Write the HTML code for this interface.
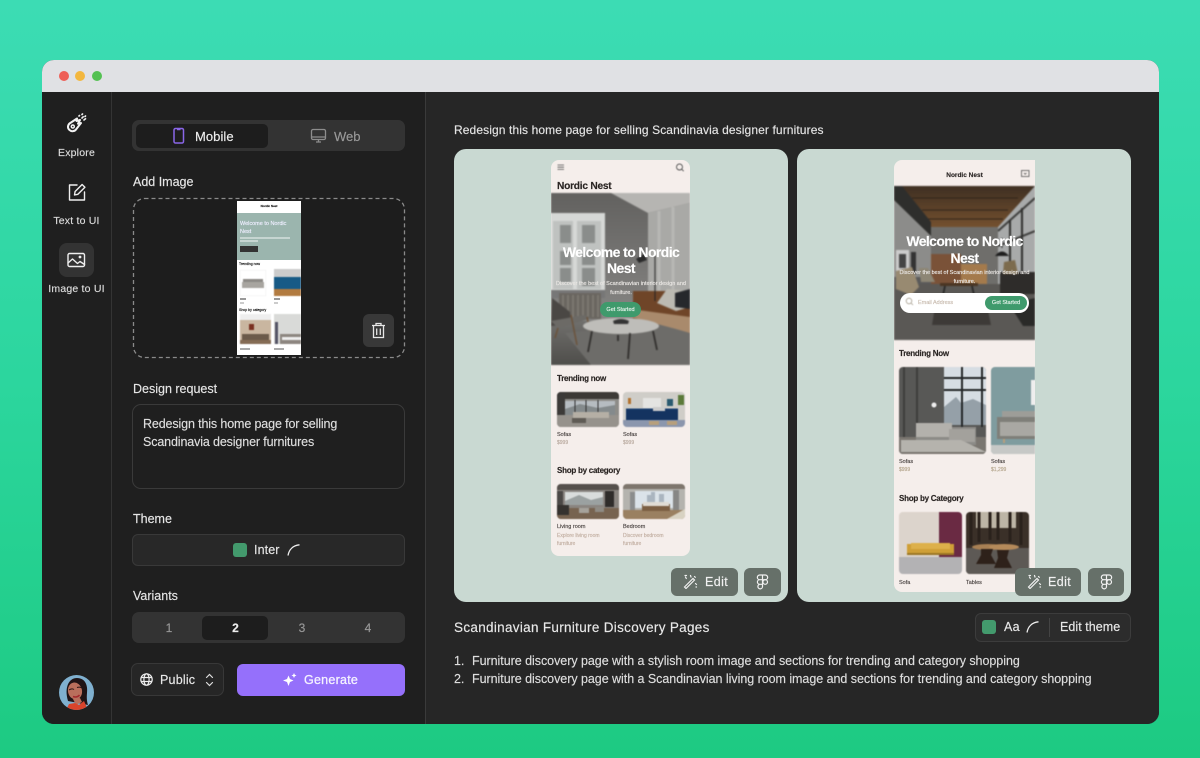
<!DOCTYPE html>
<html><head><meta charset="utf-8"><style>
*{box-sizing:border-box;margin:0;padding:0}
html,body{width:1200px;height:758px;overflow:hidden}
body{position:relative;background:linear-gradient(180deg,#3cdcb4 0%,#2cd69e 50%,#1dca82 100%);font-family:"Liberation Sans",sans-serif}
.a{position:absolute}
.t{position:absolute;white-space:nowrap;line-height:1;-webkit-text-stroke:.15px currentColor}
.c{transform:translateX(-50%)}
svg{position:absolute;display:block;overflow:hidden}
.ph svg{filter:blur(.4px)}
.ic{fill:none;stroke:#eee;stroke-width:1.4;stroke-linecap:round;stroke-linejoin:round}
.l{color:#e6e6e6;font-size:12.5px;letter-spacing:0}
.sb{color:#ddd;font-size:10.5px;letter-spacing:.2px}
.s{color:#2a2523;font-weight:bold;letter-spacing:-.25px}
.x{color:#4d4745;font-size:5.5px}
.p{color:#b9aa9f;font-size:5px}
.btn{position:absolute;background:#667069;border-radius:6px}
</style></head><body>
<div class="a" style="left:42px;top:60px;width:1117px;height:664px;border-radius:12px;overflow:hidden;background:#222">
<div class="a" style="left:0;top:0;width:1117px;height:32px;background:#e0e1e4"></div>
<div class="a" style="left:17px;top:11px;width:10px;height:10px;border-radius:50%;background:#ee5f57"></div>
<div class="a" style="left:33px;top:11px;width:10px;height:10px;border-radius:50%;background:#f3b73e"></div>
<div class="a" style="left:50px;top:11px;width:10px;height:10px;border-radius:50%;background:#54c152"></div>
<div class="a" style="left:0;top:32px;width:69px;height:632px;background:#1f1f1f"></div>
<div class="a" style="left:69px;top:32px;width:1px;height:632px;background:#343434"></div>
<div class="a" style="left:70px;top:32px;width:313px;height:632px;background:#1f1f1f"></div>
<div class="a" style="left:383px;top:32px;width:1px;height:632px;background:#3a3a3a"></div>
<div class="a" style="left:384px;top:32px;width:733px;height:632px;background:#262626"></div>
</div>

<!-- sidebar -->
<svg style="left:66px;top:113px" width="22" height="20" viewBox="0 0 22 20" fill="none" stroke="#f2f2f2" stroke-linecap="round" stroke-linejoin="round"><path d="M11 5.500 3.500 10.500c-2 2-2 5 0 6.500 2 1.800 5 1.500 6.500-.5l5-6.500-3 .7 2-3.700-3.500 1z" stroke-width="2"/><circle cx="6.800" cy="13.500" r="1.500" stroke-width="1.500"/><path d="M13 3l.5-.5M16 1.500l.5-.5M16 5l1.200-1.200M19 3.500l.5-.5M18 7l1.500-1.200" stroke-width="1.600"/></svg>
<div class="t c sb" style="left:76.500px;top:148px">Explore</div>
<svg style="left:67px;top:182px" width="20" height="20" viewBox="0 0 20 20" class="ic"><path d="M10 3H2.500v15h15v-8"/><path d="M7.500 13l.6-3.500 7-7 2.800 2.800-7 7z"/></svg>
<div class="t c sb" style="left:76.500px;top:216px">Text to UI</div>
<div class="a" style="left:59px;top:243px;width:35px;height:34px;border-radius:8px;background:#333"></div>
<svg style="left:67px;top:252px" width="19" height="16" viewBox="0 0 19 16" class="ic"><rect x="1" y="1.500" width="16.500" height="13" rx="1.500"/><path d="M1 11l4.500-4 5 4.500 2.500-2 4.500 3"/><circle cx="13" cy="5" r=".7"/></svg>
<div class="t c sb" style="left:76.500px;top:284px">Image to UI</div>
<svg style="left:59px;top:675px" width="35" height="35" viewBox="0 0 35 35"><defs><clipPath id="av"><circle cx="17.500" cy="17.500" r="17.500"/></clipPath></defs><g clip-path="url(#av)"><rect width="35" height="35" fill="#7fb0cf"/><path d="M9 26C5 12 10 3 18 3c8 0 11 7 10 15-.5 5 0 9 1 12l-10-2z" fill="#1f1416"/><ellipse cx="16" cy="16" rx="7" ry="8.500" fill="#b96f5c" transform="rotate(-12 16 16)"/><path d="M10 15q3-2 5-.5M18 12.500q3-1 5 .5" stroke="#2a1414" fill="none"/><path d="M14 21.500q4 1.500 6.500-1.500" stroke="#a3282c" stroke-width="1.600" fill="none"/><path d="M14 24l7-1 2 4-6 3z" fill="#b96f5c"/><path d="M7 35l3-6 6-1 4 2 5-4 4 9z" fill="#d8442c"/></g></svg>

<!-- Mode tabs -->
<div class="a" style="left:132px;top:120px;width:273px;height:31px;border-radius:7px;background:#333"></div>
<div class="a" style="left:136px;top:124px;width:132px;height:24px;border-radius:5px;background:#1d1d1d"></div>
<svg style="left:172px;top:127px" width="14" height="18" viewBox="0 0 14 18" fill="none" stroke="#8a66e8" stroke-width="1.500"><rect x="2" y="1.500" width="9.500" height="14.500" rx="1.500"/><path d="M5 2.500h3.500" stroke-width="1.500"/></svg>
<div class="t" style="left:195px;top:129.500px;color:#eee;font-size:13px;letter-spacing:.05px">Mobile</div>
<svg style="left:310px;top:128px" width="17" height="16" viewBox="0 0 17 16" fill="none" stroke="#8d8d8d" stroke-width="1.300"><rect x="1.500" y="1.500" width="14" height="10" rx="1.500"/><path d="M1.500 9h14M6 14h5M8.500 11.500V14"/></svg>
<div class="t" style="left:334px;top:129.500px;color:#9a9a9a;font-size:13px;letter-spacing:0">Web</div>

<!-- add image -->
<div class="t l" style="left:133px;top:175.500px">Add Image</div>
<svg style="left:132px;top:197px" width="274" height="162" viewBox="0 0 274 162"><rect x="1.500" y="1.500" width="271" height="159" rx="11" fill="#1d1d1d" stroke="#8a8a8a" stroke-width="1.300" stroke-dasharray="4 3"/></svg>
<!-- thumb -->
<div class="a ph" style="left:237px;top:201px;width:64px;height:154px;background:#fff;overflow:hidden">
<div class="t c" style="left:32px;top:4px;font-size:3px;font-weight:bold;color:#222">Nordic Nest</div>
<div class="a" style="left:0;top:12px;width:64px;height:47px;background:#9bb5ae"></div>
<div class="t" style="left:3px;top:20px;font-size:5.500px;line-height:7.500px;color:#eef;white-space:normal;width:55px">Welcome to Nordic Nest</div>
<div class="a" style="left:3px;top:36px;width:50px;height:1.500px;background:#c6d5d1"></div>
<div class="a" style="left:3px;top:39px;width:18px;height:1.500px;background:#c6d5d1"></div>
<div class="a" style="left:3px;top:45px;width:18px;height:6px;background:#333"></div>
<div class="t" style="left:2px;top:62px;font-size:3.500px;color:#222">Trending now</div>
<svg style="left:3px;top:69px" width="26" height="26" viewBox="0 0 26 26"><rect width="26" height="26" fill="#fff" stroke="#eee"/><path d="M3 9h20v7H3z" fill="#8d8a86"/><path d="M2 12h22v6H2z" fill="#a8a5a0"/></svg>
<svg style="left:37px;top:68px" width="27" height="27" viewBox="0 0 27 27"><rect width="27" height="27" fill="#ccc"/><path d="M0 8h27v12H0z" fill="#175a86"/><path d="M0 20h27v7H0z" fill="#b27b40"/></svg>
<div class="a" style="left:3px;top:97px;width:6px;height:1.500px;background:#999"></div>
<div class="a" style="left:37px;top:97px;width:6px;height:1.500px;background:#999"></div>
<div class="a" style="left:3px;top:101px;width:4px;height:1.500px;background:#ccc"></div>
<div class="a" style="left:37px;top:101px;width:4px;height:1.500px;background:#ccc"></div>
<div class="t" style="left:2px;top:108px;font-size:3.500px;color:#222">Shop by category</div>
<svg style="left:3px;top:113px" width="31" height="30" viewBox="0 0 31 30"><rect width="31" height="30" fill="#c9b6a0"/><rect width="31" height="6" fill="#eee"/><rect x="9" y="10" width="5" height="6" fill="#7a3020"/><path d="M2 20h27v6H2z" fill="#6b5a4a"/><rect y="26" width="31" height="4" fill="#856c55"/></svg>
<svg style="left:37px;top:113px" width="27" height="30" viewBox="0 0 27 30"><rect width="27" height="30" fill="#d9dad8"/><rect x="1" y="8" width="3" height="22" fill="#556"/><path d="M6 20h21v10H6z" fill="#8d8680"/><path d="M8 23h19v3H8z" fill="#eee"/></svg>
<div class="a" style="left:3px;top:147px;width:10px;height:1.500px;background:#aaa"></div>
<div class="a" style="left:37px;top:147px;width:10px;height:1.500px;background:#aaa"></div>
</div>
<div class="a" style="left:363px;top:314px;width:31px;height:33px;border-radius:6px;background:#383838"></div>
<svg style="left:371px;top:322px" width="15" height="17" viewBox="0 0 15 17" fill="none" stroke="#e6e6e6" stroke-width="1.300"><path d="M1 3.500h13M5 3.500V1.500h5v2M2.500 3.500v12h10v-12M5.700 6.500v6.500M9.300 6.500v6.500"/></svg>

<!-- design request -->
<div class="t l" style="left:133px;top:382.500px">Design request</div>
<div class="a" style="left:132px;top:404px;width:273px;height:85px;border-radius:9px;border:1px solid #3a3a3a;background:#1f1f1f"></div>
<div class="t" style="left:143px;top:418px;color:#dedede;font-size:12.500px;letter-spacing:-.13px">Redesign this home page for selling</div>
<div class="t" style="left:143px;top:436px;color:#dedede;font-size:12.500px;letter-spacing:-.13px">Scandinavia designer furnitures</div>

<!-- theme -->
<div class="t l" style="left:133px;top:512.500px">Theme</div>
<div class="a" style="left:132px;top:534px;width:273px;height:32px;border-radius:6px;border:1px solid #393939;background:#282828"></div>
<div class="a" style="left:233px;top:543px;width:14px;height:14px;border-radius:3px;background:#439a6d"></div>
<div class="t" style="left:254px;top:544px;color:#e6e6e6;font-size:12.500px;letter-spacing:.1px">Inter</div>
<svg style="left:286px;top:543px" width="15" height="14" viewBox="0 0 15 14" fill="none" stroke="#eee" stroke-width="1.300"><path d="M2 12.500C3 6.500 7 2.500 13.500 1.800"/></svg>

<!-- variants -->
<div class="t l" style="left:133px;top:589.500px">Variants</div>
<div class="a" style="left:132px;top:612px;width:273px;height:31px;border-radius:7px;background:#333"></div>
<div class="a" style="left:202px;top:616px;width:66px;height:24px;border-radius:5px;background:#1d1d1d"></div>
<div class="t c" style="left:169px;top:622px;color:#999;font-size:12px">1</div>
<div class="t c" style="left:235.500px;top:622px;color:#eee;font-size:12px;font-weight:bold">2</div>
<div class="t c" style="left:302px;top:622px;color:#999;font-size:12px">3</div>
<div class="t c" style="left:368px;top:622px;color:#999;font-size:12px">4</div>

<!-- bottom -->
<div class="a" style="left:131px;top:663px;width:93px;height:33px;border-radius:7px;border:1px solid #383838;background:#262626"></div>
<svg style="left:139px;top:672px" width="15" height="15" viewBox="0 0 15 15" fill="none" stroke="#eee" stroke-width="1.200"><circle cx="7.500" cy="7.500" r="5.700"/><ellipse cx="7.500" cy="7.500" rx="2.600" ry="5.700"/><path d="M2 5.500h11M2 9.500h11"/></svg>
<div class="t" style="left:160px;top:673.500px;color:#e8e8e8;font-size:12.500px;letter-spacing:.2px">Public</div>
<svg style="left:203px;top:672px" width="13" height="16" viewBox="0 0 13 16" fill="none" stroke="#ddd" stroke-width="1.200" stroke-linecap="round"><path d="M3.500 5.500l3-3 3 3M3.500 10.500l3 3 3-3"/></svg>
<div class="a" style="left:237px;top:664px;width:168px;height:32px;border-radius:6px;background:#9570fb"></div>
<svg style="left:282px;top:672px" width="16" height="16" viewBox="0 0 16 16" fill="#fff"><path d="M6.500 3.500l1.500 3.500 3.500 1.500-3.500 1.500-1.500 4-1.500-4L1 8.500 5 7zM12 1l.8 1.700 1.700.8-1.700.8L12 6l-.8-1.700-1.700-.8 1.700-.8z"/></svg>
<div class="t" style="left:304px;top:673.500px;color:#f4f1ff;font-size:12.500px;letter-spacing:.25px;-webkit-text-stroke:.3px #f4f1ff">Generate</div>

<!-- right -->
<div class="t" style="left:454px;top:123.500px;color:#e4e4e4;font-size:12px;letter-spacing:.11px">Redesign this home page for selling Scandinavia designer furnitures</div>
<div class="a" style="left:454px;top:149px;width:334px;height:453px;border-radius:12px;background:#c9d9d2"></div>
<div class="a" style="left:797px;top:149px;width:334px;height:453px;border-radius:12px;background:#c9d9d2"></div>

<!-- Phone 1 -->
<div class="a ph" style="left:551px;top:160px;width:139px;height:396px;border-radius:8px;background:#f5eeeb;overflow:hidden">
<svg style="left:6px;top:4px" width="8" height="7" viewBox="0 0 8 7" stroke="#555" stroke-width=".8"><path d="M.5 1h6.500M.5 3.200h6.500M.5 5.400h6.500"/></svg>
<svg style="left:124px;top:3px" width="10" height="9" viewBox="0 0 10 9" fill="none" stroke="#555" stroke-width=".9"><circle cx="4.500" cy="4" r="3"/><path d="M6.700 6.200l2 2"/></svg>
<div class="t s" style="left:6px;top:22px;font-size:10.200px">Nordic Nest</div>
<svg style="left:0;top:33px;filter:blur(.7px)" width="139" height="172" viewBox="0 0 139 172">
<defs><linearGradient id="w1" x1="0" y1="0" x2="0" y2="1"><stop offset="0" stop-color="#62615f"/><stop offset="1" stop-color="#939290"/></linearGradient><linearGradient id="f1" x1="0" y1="0" x2="0" y2="1"><stop offset="0" stop-color="#706f6c"/><stop offset="1" stop-color="#4e4d4a"/></linearGradient></defs>
<rect width="139" height="172" fill="url(#w1)"/>
<path d="M60 0h79v10l-42 10z" fill="#b6b5b2"/>
<path d="M97 20l42-10v110H97z" fill="#a9a9a6"/>
<path d="M108 18v88M122 14v90" stroke="#b7b7b4" stroke-width="3"/>
<path d="M0 20h54v77H0z" fill="#d6d8d6"/>
<path d="M2 28h20v68H2zM26 28h24v68H26z" fill="#bfc2c0"/>
<path d="M9 32h11v18H9zM9 58h11v14H9zM9 75h11v14H9zM31 32h13v18H31zM31 58h13v14H31zM31 75h13v18H31z" fill="#8a8d8b"/>
<path d="M0 97h54v8H0z" fill="#777"/>
<path d="M8 100h42v26H8z" fill="#6a6660"/>
<path d="M12 102v22M17 102v22M22 102v22M27 102v22M32 102v22M37 102v22M42 102v22M47 102v22" stroke="#86827b" stroke-width="1.200"/>
<path d="M0 128h139v44H0z" fill="url(#f1)"/>
<path d="M14 140l96-10 29 6v36H40z" fill="#6d6c69"/>
<path d="M82 98h57v28H82z" fill="#6f4528"/>
<path d="M80 116l59 8v16l-14-4-45-12z" fill="#a98a6c"/>
<path d="M106 110l10-14 23 2v16l-14 4z" fill="#bcbab2"/>
<path d="M124 100l15-4v20l-15-2z" fill="#26282c"/>
<path d="M1 105l18 14 1 12-20 2z" fill="#4a4744"/>
<path d="M0 128l33-6 8 3-34 10z" fill="#6c6a66"/>
<path d="M7 135l-3 10M20 122l6 30M36 124l3 14" stroke="#6b5137" stroke-width="1.400"/>
<ellipse cx="70" cy="133" rx="38" ry="8" fill="#bebdb9"/>
<path d="M62 128q8-4 16 0l-1 3h-14z" fill="#333"/>
<path d="M41 138l-4 21M102 138l4 19M79 140l-2 26M67 142v6" stroke="#2c2a28" stroke-width="1.700"/>
<path d="M104 62v46" stroke="#222" stroke-width="1"/><path d="M85 66l8-5 3 6-8 3z" fill="#2a2a2a"/>
</svg>
<div class="t c" style="left:70px;top:84px;color:#fff;font-size:14px;font-weight:bold;letter-spacing:-.6px;line-height:16px;text-align:center;width:125px;white-space:normal">Welcome to Nordic Nest</div>
<div class="t c" style="left:70px;top:120px;color:#e9e6e3;font-size:5.500px;line-height:8.500px;text-align:center;width:130px;white-space:normal">Discover the best of Scandinavian interior design and furniture.</div>
<div class="a" style="left:49px;top:142px;width:41px;height:15px;border-radius:8px;background:#3f9a6c"></div>
<div class="t c" style="left:69.500px;top:147.500px;color:#e6f3ec;font-size:5.500px">Get Started</div>
<div class="t s" style="left:6px;top:215px;font-size:8px">Trending now</div>
<svg style="left:6px;top:232px" width="62" height="35" viewBox="0 0 62 35"><defs><clipPath id="r1"><rect width="62" height="35" rx="4"/></clipPath></defs><g clip-path="url(#r1)"><rect width="62" height="35" fill="#8d8c88"/><rect width="62" height="7" fill="#3d3a36"/><rect x="8" y="9" width="50" height="14" fill="#b6bcc1"/><path d="M8 17l15-5 18 4 17-3v10H8z" fill="#848a8c"/><path d="M0 0h8v24H0z" fill="#3c3a38"/><path d="M18 8v15M29 8v15M41 8v15" stroke="#333"/><rect x="0" y="23" width="62" height="12" fill="#96928c"/><path d="M16 20h36v6H16z" fill="#b5afa5"/><rect x="15" y="26" width="14" height="5" fill="#5f5b55"/></g></svg>
<svg style="left:72px;top:232px" width="62" height="35" viewBox="0 0 62 35"><defs><clipPath id="r2"><rect width="62" height="35" rx="4"/></clipPath></defs><g clip-path="url(#r2)"><rect width="62" height="35" fill="#cfcdc8"/><rect x="20" y="6" width="18" height="10" fill="#e4e4e2"/><rect x="44" y="7" width="6" height="7" fill="#2a5a70"/><rect x="5" y="6" width="3" height="6" fill="#b3722f"/><rect x="55" y="3" width="6" height="10" fill="#5c7a3a"/><path d="M3 17h52v11H3z" fill="#143360"/><path d="M3 17h52" stroke="#1f4477"/><rect x="30" y="15" width="12" height="4" fill="#ccc"/><rect y="28" width="62" height="7" fill="#8b96ad"/><rect x="26" y="29" width="10" height="4" fill="#b79f7c"/><rect x="44" y="29" width="10" height="4" fill="#b79f7c"/></g></svg>
<div class="t x" style="left:6px;top:273px">Sofas</div><div class="t p" style="left:6px;top:281px">$999</div>
<div class="t x" style="left:72px;top:273px">Sofas</div><div class="t p" style="left:72px;top:281px">$999</div>
<div class="t s" style="left:6px;top:307px;font-size:8px">Shop by category</div>
<svg style="left:6px;top:324px" width="62" height="35" viewBox="0 0 62 35"><defs><clipPath id="r3"><rect width="62" height="35" rx="4"/></clipPath></defs><g clip-path="url(#r3)"><rect width="62" height="35" fill="#8a8580"/><rect width="62" height="6" fill="#55504c"/><rect x="8" y="8" width="38" height="13" fill="#d9dcdc"/><path d="M8 17l14-6 12 5 12-3v8H8z" fill="#9ba1a1"/><rect x="48" y="7" width="9" height="16" fill="#2f2c2a"/><rect x="0" y="7" width="6" height="18" fill="#4b4846"/><rect y="24" width="62" height="11" fill="#776350"/><rect x="0" y="21" width="12" height="10" fill="#35322f"/><rect x="22" y="24" width="10" height="5" fill="#a6a29b"/><rect x="38" y="23" width="9" height="5" fill="#8f8b84"/></g></svg>
<svg style="left:72px;top:324px" width="62" height="35" viewBox="0 0 62 35"><defs><clipPath id="r4"><rect width="62" height="35" rx="4"/></clipPath></defs><g clip-path="url(#r4)"><rect width="62" height="35" fill="#b4b3ae"/><rect width="62" height="5" fill="#7e766d"/><rect x="12" y="7" width="38" height="17" fill="#dbe3e9"/><path d="M24 22V11h4v-3h4v14M36 22V10h5v12" fill="#aab5bf"/><rect x="7" y="8" width="5" height="18" fill="#8b8d8d"/><rect x="50" y="6" width="6" height="20" fill="#878785"/><rect y="26" width="62" height="9" fill="#9a8061"/><path d="M19 20h28v7H19z" fill="#7c5f43"/><path d="M20 18h26v4H20z" fill="#e0dcd5"/><path d="M44 35l18-10v10z" fill="#d8d2c2"/></g></svg>
<div class="t x" style="left:6px;top:365px">Living room</div>
<div class="t p" style="left:6px;top:372px;color:#c3b0a3;line-height:8px;white-space:normal;width:60px">Explore living room furniture</div>
<div class="t x" style="left:72px;top:365px">Bedroom</div>
<div class="t p" style="left:72px;top:372px;color:#c3b0a3;line-height:8px;white-space:normal;width:56px">Discover bedroom furniture</div>
</div>

<!-- Phone 2 -->
<div class="a ph" style="left:894px;top:160px;width:141px;height:432px;border-radius:8px 0 8px 8px;background:#f5eeeb;overflow:hidden">
<div class="t c" style="left:70.500px;top:12.500px;font-size:6.500px;font-weight:bold;color:#2c2726">Nordic Nest</div>
<svg style="left:127px;top:10px" width="9" height="8" viewBox="0 0 9 8" fill="none" stroke="#555" stroke-width=".8"><rect x=".5" y=".5" width="7.500" height="6"/><path d="M3 3l1.200 1.200L5.500 3"/></svg>
<svg style="left:0;top:26px;filter:blur(.7px)" width="141" height="154" viewBox="0 0 141 154">
<defs><linearGradient id="c2" x1="0" y1="0" x2="0" y2="1"><stop offset="0" stop-color="#3e2f22"/><stop offset="1" stop-color="#74502e"/></linearGradient></defs>
<rect width="141" height="154" fill="#5a5a5a"/>
<path d="M0 0h141l-37 41H37z" fill="url(#c2)"/>
<path d="M18 12h106M28 24h86M33 33h76" stroke="#2e231a" stroke-width="1"/>
<path d="M0 0l37 41v50H0z" fill="#8c8c8a"/>
<path d="M0 0h8l29 36v14L0 14z" fill="#2e2e2c"/>
<path d="M141 0l-37 41v58h37z" fill="#a8aaaa"/>
<path d="M104 45l37-33M104 60l37-15" stroke="#3c3c3a" stroke-width="2"/>
<path d="M116 34v64M128 22v76" stroke="#2e2e2c" stroke-width="2"/>
<rect x="37" y="41" width="67" height="60" fill="#6f6e6b"/>
<rect x="37" y="68" width="30" height="36" fill="#7a5238"/>
<rect x="67" y="78" width="26" height="20" fill="#a47a4c"/>
<rect x="0" y="98" width="141" height="56" fill="#5a5855"/>
<rect x="2" y="64" width="13" height="22" fill="#ccc"/><rect x="5" y="68" width="7" height="14" fill="#444"/><rect x="17" y="66" width="5" height="22" fill="#333"/>
<path d="M2 85l16-4 7 20-8 8-15-6z" fill="#988a71"/>
<path d="M25 82h9l7 14H27z" fill="#8d8675"/>
<path d="M46 97h38v3H46z" fill="#4a3522"/>
<path d="M51 100l-2 9M78 100l2 9" stroke="#222" stroke-width="1.600"/>
<path d="M106 86h35v22h-35z" fill="#2e2c2a"/>
<path d="M110 76l11-2 3 14h-15z" fill="#7c6b4d"/>
<path d="M101 70q7-9 14 0z" fill="#1d1d1d"/><path d="M108 52v10" stroke="#222"/>
<path d="M42 115h50l5 24H38z" fill="#3d3a37"/>
<path d="M115 118l26-6v28h-12z" fill="#2a2a28"/>
</svg>
<div class="t c" style="left:70.500px;top:73px;color:#fff;font-size:14px;font-weight:bold;letter-spacing:-.6px;line-height:16.500px;text-align:center;width:125px;white-space:normal">Welcome to Nordic Nest</div>
<div class="t c" style="left:70.500px;top:108.500px;color:#e9e6e3;font-size:5.500px;line-height:9px;text-align:center;width:135px;white-space:normal">Discover the best of Scandinavian interior design and furniture.</div>
<div class="a" style="left:6px;top:133px;width:129px;height:20px;border-radius:10px;background:#fff"></div>
<svg style="left:11px;top:137px" width="9" height="9" viewBox="0 0 9 9" fill="none" stroke="#a79f8f" stroke-width=".8"><circle cx="4" cy="4" r="2.800"/><path d="M6 6l2 2"/></svg>
<div class="t" style="left:24px;top:140.500px;color:#c9bcb0;font-size:5.500px">Email Address</div>
<div class="a" style="left:91px;top:136px;width:42px;height:14px;border-radius:7px;background:#3f9a6c"></div>
<div class="t c" style="left:112px;top:140.500px;color:#e6f3ec;font-size:5.500px">Get Started</div>
<div class="t s" style="left:5px;top:190px;font-size:8px">Trending Now</div>
<svg style="left:5px;top:207px" width="87" height="87" viewBox="0 0 87 87"><defs><clipPath id="r5"><rect width="87" height="87" rx="4"/></clipPath></defs><g clip-path="url(#r5)"><rect width="87" height="87" fill="#585856"/><path d="M5 0v70M18 0v70" stroke="#3e3e3c" stroke-width="2"/><rect x="45" y="0" width="42" height="58" fill="#d6dde3"/><path d="M45 40l12-10 5 6 12-4 13 6v20H45z" fill="#95a0a8"/><path d="M63 0v60M83 0v60M45 11h42M45 23h42" stroke="#25282a" stroke-width="2"/><rect x="0" y="70" width="87" height="17" fill="#7a7670"/><rect x="17" y="60" width="60" height="18" fill="#8c8b87"/><path d="M17 56h36v14H17z" fill="#b3b1ac"/><path d="M50 62h26v13H50z" fill="#a3a19c"/><path d="M2 73h60l25 12H2z" fill="#b5b3ad"/><circle cx="35" cy="38" r="2.500" fill="#eee"/></g></svg>
<svg style="left:97px;top:207px" width="44" height="87" viewBox="0 0 44 87"><defs><clipPath id="r6"><rect width="60" height="87" rx="4"/></clipPath></defs><g clip-path="url(#r6)"><rect width="44" height="87" fill="#7f9c9f"/><rect x="40" y="13" width="4" height="25" fill="#eee"/><rect x="11" y="44" width="33" height="20" fill="#9d9d98"/><rect x="6" y="50" width="38" height="22" fill="#7f7f79"/><rect x="9" y="55" width="35" height="14" fill="#a9a8a3"/><rect y="78" width="44" height="9" fill="#c6c8c6"/><path d="M13 72v4" stroke="#b79f7c" stroke-width="2"/></g></svg>
<div class="t x" style="left:5px;top:300px">Sofas</div><div class="t p" style="left:5px;top:308px;color:#b5a68d">$999</div>
<div class="t x" style="left:97px;top:300px">Sofas</div><div class="t p" style="left:97px;top:308px;color:#b5a68d">$1,299</div>
<div class="t s" style="left:5px;top:335px;font-size:8px">Shop by Category</div>
<svg style="left:5px;top:352px" width="63" height="62" viewBox="0 0 63 62"><defs><clipPath id="r7"><rect width="63" height="62" rx="4"/></clipPath></defs><g clip-path="url(#r7)"><rect width="40" height="45" fill="#dcd4cc"/><rect x="40" width="23" height="45" fill="#6a2a43"/><rect y="45" width="63" height="17" fill="#b3b2b4"/><path d="M8 32h47v9H8z" fill="#cf9f36"/><path d="M12 31h39v6H12z" fill="#ddb04a"/><rect x="8" y="41" width="47" height="2" fill="#9c7724"/></g></svg>
<svg style="left:72px;top:352px" width="63" height="62" viewBox="0 0 63 62"><defs><clipPath id="r8"><rect width="63" height="62" rx="4"/></clipPath></defs><g clip-path="url(#r8)"><rect width="63" height="62" fill="#3a3028"/><rect x="10" y="0" width="40" height="16" fill="#bdb5a6"/><path d="M5 0v33M13 0v30M24 0v28M32 0v28M44 0v30M55 0v33" stroke="#2a211b" stroke-width="3"/><rect y="36" width="63" height="26" fill="#5d5955"/><ellipse cx="22" cy="35" rx="16" ry="3" fill="#a88054"/><ellipse cx="38" cy="35" rx="15" ry="3" fill="#b58a5a"/><path d="M15 37h12l-2 6 5 9H10l5-9zM31 38h12l-2 8 5 10H28l4-10z" fill="#2e211a"/></g></svg>
<div class="t x" style="left:5px;top:421px">Sofa</div>
<div class="t x" style="left:72px;top:421px">Tables</div>
</div>

<!-- Edit buttons -->
<div class="btn" style="left:671px;top:568px;width:67px;height:28px"></div>
<div class="btn" style="left:744px;top:568px;width:37px;height:28px"></div>
<div class="btn" style="left:1015px;top:568px;width:66px;height:28px"></div>
<div class="btn" style="left:1088px;top:568px;width:36px;height:28px"></div>
<svg style="left:683px;top:574px" width="15" height="15" viewBox="0 0 15 15" fill="none" stroke="#f1f1f1" stroke-width="1.200" stroke-linecap="round"><path d="M1.500 13L10 4.500l1.500 1.500-8.500 8.500zM2.500 3l.8 1.500M2 1.500h1.500M7.500 1.500l.5 1.500M12.500 9.500l1 1M13 13h.5M11.500 2.500l.8.800"/></svg>
<div class="t" style="left:705px;top:575.500px;color:#f1f1f1;font-size:12.500px;letter-spacing:.4px">Edit</div>
<svg style="left:756px;top:574px" width="13" height="16" viewBox="0 0 13 16" fill="none" stroke="#f1f1f1" stroke-width="1.200"><path d="M6.500 1H3.700a2.300 2.300 0 0 0 0 4.700h2.800zM6.500 1h2.800a2.300 2.300 0 0 1 0 4.700H6.500zM6.500 5.700H3.700a2.300 2.300 0 0 0 0 4.600h2.800zM6.500 10.300H3.700a2.300 2.300 0 1 0 2.800 2.300z"/><circle cx="9.200" cy="8" r="2.300"/></svg>
<svg style="left:1027px;top:574px" width="15" height="15" viewBox="0 0 15 15" fill="none" stroke="#f1f1f1" stroke-width="1.200" stroke-linecap="round"><path d="M1.500 13L10 4.500l1.500 1.500-8.500 8.500zM2.500 3l.8 1.500M2 1.500h1.500M7.500 1.500l.5 1.500M12.500 9.500l1 1M13 13h.5M11.500 2.500l.8.800"/></svg>
<div class="t" style="left:1048px;top:575.500px;color:#f1f1f1;font-size:12.500px;letter-spacing:.4px">Edit</div>
<svg style="left:1100px;top:574px" width="13" height="16" viewBox="0 0 13 16" fill="none" stroke="#f1f1f1" stroke-width="1.200"><path d="M6.500 1H3.700a2.300 2.300 0 0 0 0 4.700h2.800zM6.500 1h2.800a2.300 2.300 0 0 1 0 4.700H6.500zM6.500 5.700H3.700a2.300 2.300 0 0 0 0 4.600h2.800zM6.500 10.300H3.700a2.300 2.300 0 1 0 2.800 2.300z"/><circle cx="9.200" cy="8" r="2.300"/></svg>

<!-- footer -->
<div class="t" style="left:454px;top:620.500px;color:#e8e8e8;font-size:13.500px;letter-spacing:.31px">Scandinavian Furniture Discovery Pages</div>
<div class="a" style="left:975px;top:613px;width:156px;height:29px;border-radius:6px;border:1px solid #3c3c3c;background:#2c2c2c"></div>
<div class="a" style="left:982px;top:620px;width:14px;height:14px;border-radius:3px;background:#439a6d"></div>
<div class="t" style="left:1004px;top:621px;color:#e8e8e8;font-size:12.500px;letter-spacing:.3px">Aa</div>
<svg style="left:1025px;top:620px" width="15" height="14" viewBox="0 0 15 14" fill="none" stroke="#eee" stroke-width="1.300"><path d="M2 12.500C3 6.500 7 2.500 13.500 1.800"/></svg>
<div class="a" style="left:1049px;top:618px;width:1px;height:19px;background:#444"></div>
<div class="t" style="left:1060px;top:621px;color:#e8e8e8;font-size:12.500px;letter-spacing:.05px">Edit theme</div>
<div class="t" style="left:454px;top:655px;color:#dedede;font-size:12.500px;letter-spacing:-.04px"><span style="display:inline-block;width:18px">1.</span>Furniture discovery page with a stylish room image and sections for trending and category shopping</div>
<div class="t" style="left:454px;top:673px;color:#dedede;font-size:12.500px;letter-spacing:-.04px"><span style="display:inline-block;width:18px">2.</span>Furniture discovery page with a Scandinavian living room image and sections for trending and category shopping</div>
</body></html>
